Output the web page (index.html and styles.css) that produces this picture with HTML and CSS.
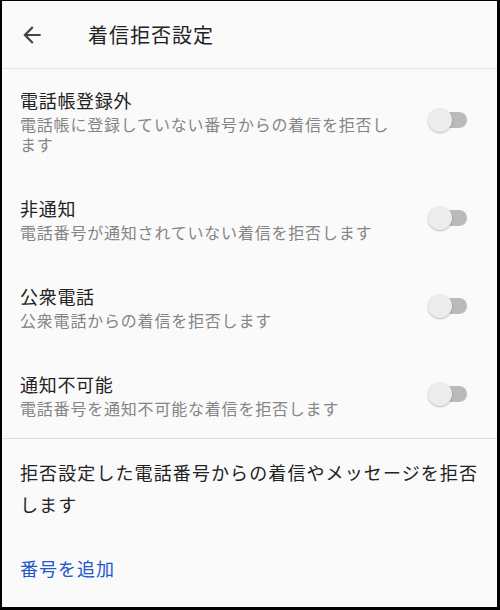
FILE: index.html
```html
<!DOCTYPE html>
<html>
  <head>
    <title>着信拒否設定</title>
    <link rel="stylesheet" href="styles.css">
  </head>
  <body>
    <div class="screen">
      <div class="appbar">
        <svg class="back" width="26" height="26" viewBox="0 0 24 24">
          <path d="M20 11H7.83l5.59-5.59L12 4l-8 8 8 8 1.41-1.41L7.83 13H20v-2z" fill="#444"/>
        </svg>
        <h1 class="appbar-title">着信拒否設定</h1>
      </div>

      <div class="list">
        <div class="row">
          <div class="text">
            <div class="title">電話帳登録外</div>
            <div class="sub">電話帳に登録していない番号からの着信を拒否します</div>
          </div>
          <div class="switch"></div>
        </div>
        <div class="row">
          <div class="text">
            <div class="title">非通知</div>
            <div class="sub">電話番号が通知されていない着信を拒否します</div>
          </div>
          <div class="switch"></div>
        </div>
        <div class="row">
          <div class="text">
            <div class="title">公衆電話</div>
            <div class="sub">公衆電話からの着信を拒否します</div>
          </div>
          <div class="switch"></div>
        </div>
        <div class="row">
          <div class="text">
            <div class="title">通知不可能</div>
            <div class="sub">電話番号を通知不可能な着信を拒否します</div>
          </div>
          <div class="switch"></div>
        </div>
      </div>

      <div class="blocked">
        <p class="note">拒否設定した電話番号からの着信やメッセージを拒否します</p>
        <a class="add" href="#">番号を追加</a>
      </div>
    </div>
  </body>
</html>
```
FILE: styles.css
```css
html, body {
  margin: 0;
  padding: 0;
  background: #000;
}
body {
  font-family: "Noto Sans CJK JP", "Noto Sans", sans-serif;
  color: #222;
}
.screen {
  margin: 1px 3px 3px 2px;
  height: 606px;
  background: #fafafa;
  overflow: hidden;
}
.appbar {
  display: flex;
  align-items: center;
  height: 67px;
  padding-left: 17px;
  border-bottom: 1px solid #e2e2e2;
}
.back {
  margin-right: 43px;
}
.appbar-title {
  margin: 0;
  font-size: 20px;
  font-weight: normal;
  letter-spacing: 1px;
  color: #222;
}
.row {
  display: flex;
  align-items: center;
  padding: 19px 30px 23px 18px;
}
.row:last-child {
  padding-bottom: 20px;
}
.text {
  flex: 1;
  margin-right: 30px;
}
.title {
  font-size: 18px;
  line-height: 24px;
  letter-spacing: 0.7px;
  color: #222;
  margin-bottom: 2px;
}
.sub {
  font-size: 16px;
  line-height: 20px;
  letter-spacing: 0.8px;
  color: #858585;
}
.switch {
  position: relative;
  width: 39px;
  height: 24px;
  margin-top: -3px;
}
.switch::before {
  content: "";
  position: absolute;
  left: 4px;
  top: 4px;
  width: 35px;
  height: 16px;
  border-radius: 8px;
  background: #bababa;
}
.switch::after {
  content: "";
  position: absolute;
  left: 0;
  top: 0;
  width: 24px;
  height: 24px;
  border-radius: 50%;
  background: #ececec;
  box-shadow: 0 1px 2px rgba(0, 0, 0, 0.25);
}
.blocked {
  border-top: 1px solid #e0e0e0;
  padding: 17px 10px 0 18px;
}
.note {
  margin: 0;
  font-size: 18px;
  line-height: 32px;
  letter-spacing: 1.1px;
  color: #222;
}
.add {
  display: block;
  margin-top: 36px;
  font-size: 18px;
  line-height: 24px;
  letter-spacing: 1px;
  color: #2157c9;
  text-decoration: none;
}
```
